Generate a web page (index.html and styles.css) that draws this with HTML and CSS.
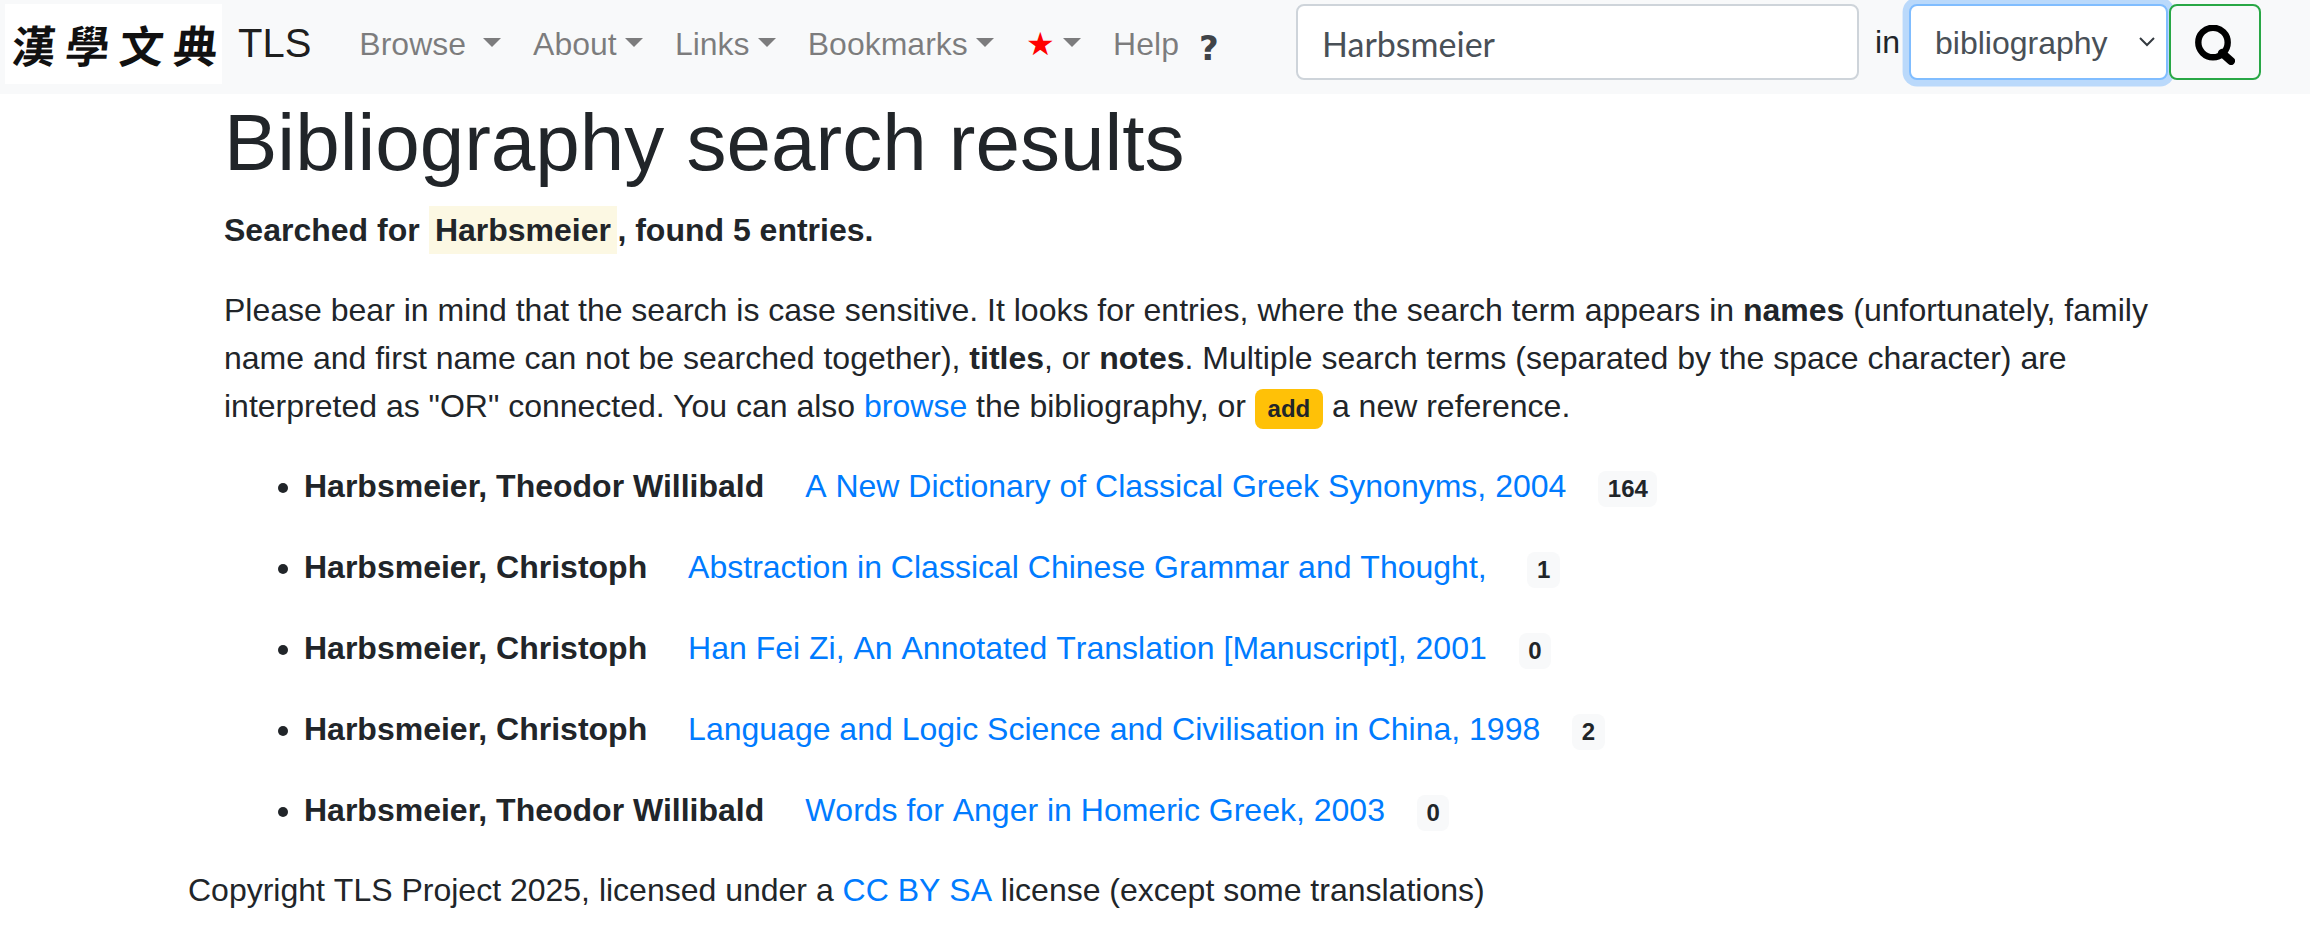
FILE: index.html
```html
<!DOCTYPE html>
<html lang="en">
<head>
<meta charset="utf-8">
<title>Bibliography search results</title>
<link rel="stylesheet" href="styles.css">
</head>
<body>
<nav class="navbar">
  <div class="logo" lang="zh-Hant"><span class="logo-text">漢學文典</span></div>
  <a class="brand" href="#">TLS</a>
  <ul class="nav">
    <li><a class="nav-link" href="#">Browse <span class="caret"></span></a></li>
    <li><a class="nav-link" href="#">About<span class="caret"></span></a></li>
    <li><a class="nav-link" href="#">Links<span class="caret"></span></a></li>
    <li><a class="nav-link" href="#">Bookmarks<span class="caret"></span></a></li>
    <li><a class="nav-link" href="#"><span class="star">★</span><span class="caret"></span></a></li>
    <li><a class="nav-link" href="#">Help<span class="help-mark">?</span></a></li>
  </ul>
  <form class="search">
    <input class="search-input" type="text" value="Harbsmeier">
    <span class="search-in">in</span>
    <select class="search-select"><option>bibliography</option></select>
    <button class="search-button" type="button" aria-label="Search">
      <svg class="search-icon" viewBox="0 0 40 40" width="40" height="40"><circle cx="18" cy="17.5" r="14.7" fill="none" stroke="#000" stroke-width="6.4"/><path d="M27 28 L36 36" stroke="#000" stroke-width="8" stroke-linecap="round"/></svg>
    </button>
  </form>
</nav>
<main class="content">
  <h1 class="title">Bibliography search results</h1>
  <p class="summary"><strong>Searched for <mark class="term">Harbsmeier</mark>, found 5 entries.</strong></p>
  <p class="intro">Please bear in mind that the search is case sensitive. It looks for entries, where the search term appears in <strong>names</strong> (unfortunately, family name and first name can not be searched together), <strong>titles</strong>, or <strong>notes</strong>. Multiple search terms (separated by the space character) are interpreted as "OR" connected. You can also <a href="#">browse</a> the bibliography, or <a class="add" href="#">add</a> a new reference.</p>
  <ul class="results">
    <li><strong>Harbsmeier, Theodor Willibald</strong> <a class="ref" href="#">A New Dictionary of Classical Greek Synonyms, 2004</a> <span class="count">164</span></li>
    <li><strong>Harbsmeier, Christoph</strong> <a class="ref" href="#">Abstraction in Classical Chinese Grammar and Thought,&nbsp;</a> <span class="count">1</span></li>
    <li><strong>Harbsmeier, Christoph</strong> <a class="ref" href="#">Han Fei Zi, An Annotated Translation [Manuscript], 2001</a> <span class="count">0</span></li>
    <li><strong>Harbsmeier, Christoph</strong> <a class="ref" href="#">Language and Logic Science and Civilisation in China, 1998</a> <span class="count">2</span></li>
    <li><strong>Harbsmeier, Theodor Willibald</strong> <a class="ref" href="#">Words for Anger in Homeric Greek, 2003</a> <span class="count">0</span></li>
  </ul>
</main>
<footer class="footer">Copyright TLS Project 2025, licensed under a <a href="#">CC BY SA</a> license (except some translations)</footer>
</body>
</html>
```
FILE: styles.css
```css
* { box-sizing: border-box; }
html, body { margin: 0; padding: 0; }
body {
  background: #fff;
  color: #212529;
  font-family: "Liberation Sans", Arial, sans-serif;
  font-size: 32px;
  line-height: 48px;
}
a { color: #007bff; text-decoration: none; }
strong { font-weight: 700; }

.navbar {
  display: flex;
  align-items: flex-start;
  height: 94px;
  padding: 4px 49px 0 5px;
  background: #f8f9fa;
}
.logo {
  flex: none;
  width: 217px;
  height: 80px;
  background: #fff;
  padding-left: 7px;
  white-space: nowrap;
}
.logo-text {
  display: inline-block;
  margin-right: -10px;
  color: #111;
  font-family: "Noto Sans CJK TC", "Noto Sans CJK SC", sans-serif;
  font-size: 44px;
  font-weight: 700;
  line-height: 80px;
  letter-spacing: 10px;
  transform: skewX(-6deg);
}
.brand {
  margin: 9px 32px 0 16px;
  color: rgba(0, 0, 0, .9);
  font-size: 40px;
  line-height: 60px;
}
.nav {
  display: flex;
  margin: 8px 0 0;
  padding: 0;
  list-style: none;
}
.nav-link {
  display: block;
  padding: 8px 16px;
  color: rgba(0, 0, 0, .5);
}
.caret {
  display: inline-block;
  margin-left: 8.16px;
  vertical-align: 7.7px;
  border-top: 9.6px solid;
  border-right: 9.6px solid transparent;
  border-left: 9.6px solid transparent;
}
.star { color: #f00; }
.help-mark {
  margin-left: 20px;
  color: #404448;
  font-family: "DejaVu Sans", sans-serif;
  font-size: 34px;
  font-weight: 700;
  line-height: 1;
  vertical-align: -5px;
}
.search {
  display: flex;
  align-items: center;
  margin-left: auto;
}
.search-input {
  width: 563px;
  height: 76px;
  padding: 14px 24px 12px;
  border: 2px solid #ced4da;
  border-radius: 8px;
  background: #fff;
  color: #495057;
  font-family: Lato, sans-serif;
  font-size: 34px;
}
.search-in { margin: 0 9px 0 16px; }
.search-select {
  width: 259px;
  height: 76px;
  margin-right: 1px;
  padding: 2px 48px 0 24px;
  border: 2px solid #80bdff;
  border-radius: 8px;
  outline: 0;
  box-shadow: 0 0 0 6.4px rgba(0, 123, 255, .25);
  background: #fff url("data:image/svg+xml,%3Csvg xmlns='http://www.w3.org/2000/svg' width='18' height='12' viewBox='0 0 18 12'%3E%3Cpath d='M2 2l7 7 7-7' fill='none' stroke='%23343a40' stroke-width='2'/%3E%3C/svg%3E") no-repeat right 10px center;
  color: #495057;
  font: inherit;
  -webkit-appearance: none;
  appearance: none;
}
.search-button {
  display: flex;
  align-items: center;
  justify-content: center;
  width: 92px;
  height: 76px;
  padding: 6px 0 0;
  border: 2px solid #28a745;
  border-radius: 8px;
  background: #f8f9fa;
}

.content { padding: 0 130px 0 224px; }
.title {
  margin: 1px 0 15px;
  font-size: 80px;
  font-weight: 500;
  line-height: 96px;
}
.summary, .intro { margin: 0 0 32px; }
.term {
  padding: 6.4px;
  background: #fcf8e3;
  color: inherit;
}
.add {
  display: inline-block;
  padding: 8px 12.8px;
  border-radius: 8px;
  background: #ffc107;
  color: #212529;
  font-size: 24px;
  font-weight: 700;
  line-height: 1;
}
.results { margin: 2px 0 0; padding: 0 0 0 80px; }
.results li { padding-bottom: 33px; }
.results li:last-child { padding-bottom: 32px; }
.ref { margin-left: 32px; font-kerning: none; }
.count {
  display: inline-block;
  margin-left: 23px;
  padding: 6px 9.6px;
  border-radius: 8px;
  background: #f8f9fa;
  font-size: 24px;
  font-weight: 700;
  line-height: 1;
}
.footer { padding-left: 188px; font-kerning: none; }
```
